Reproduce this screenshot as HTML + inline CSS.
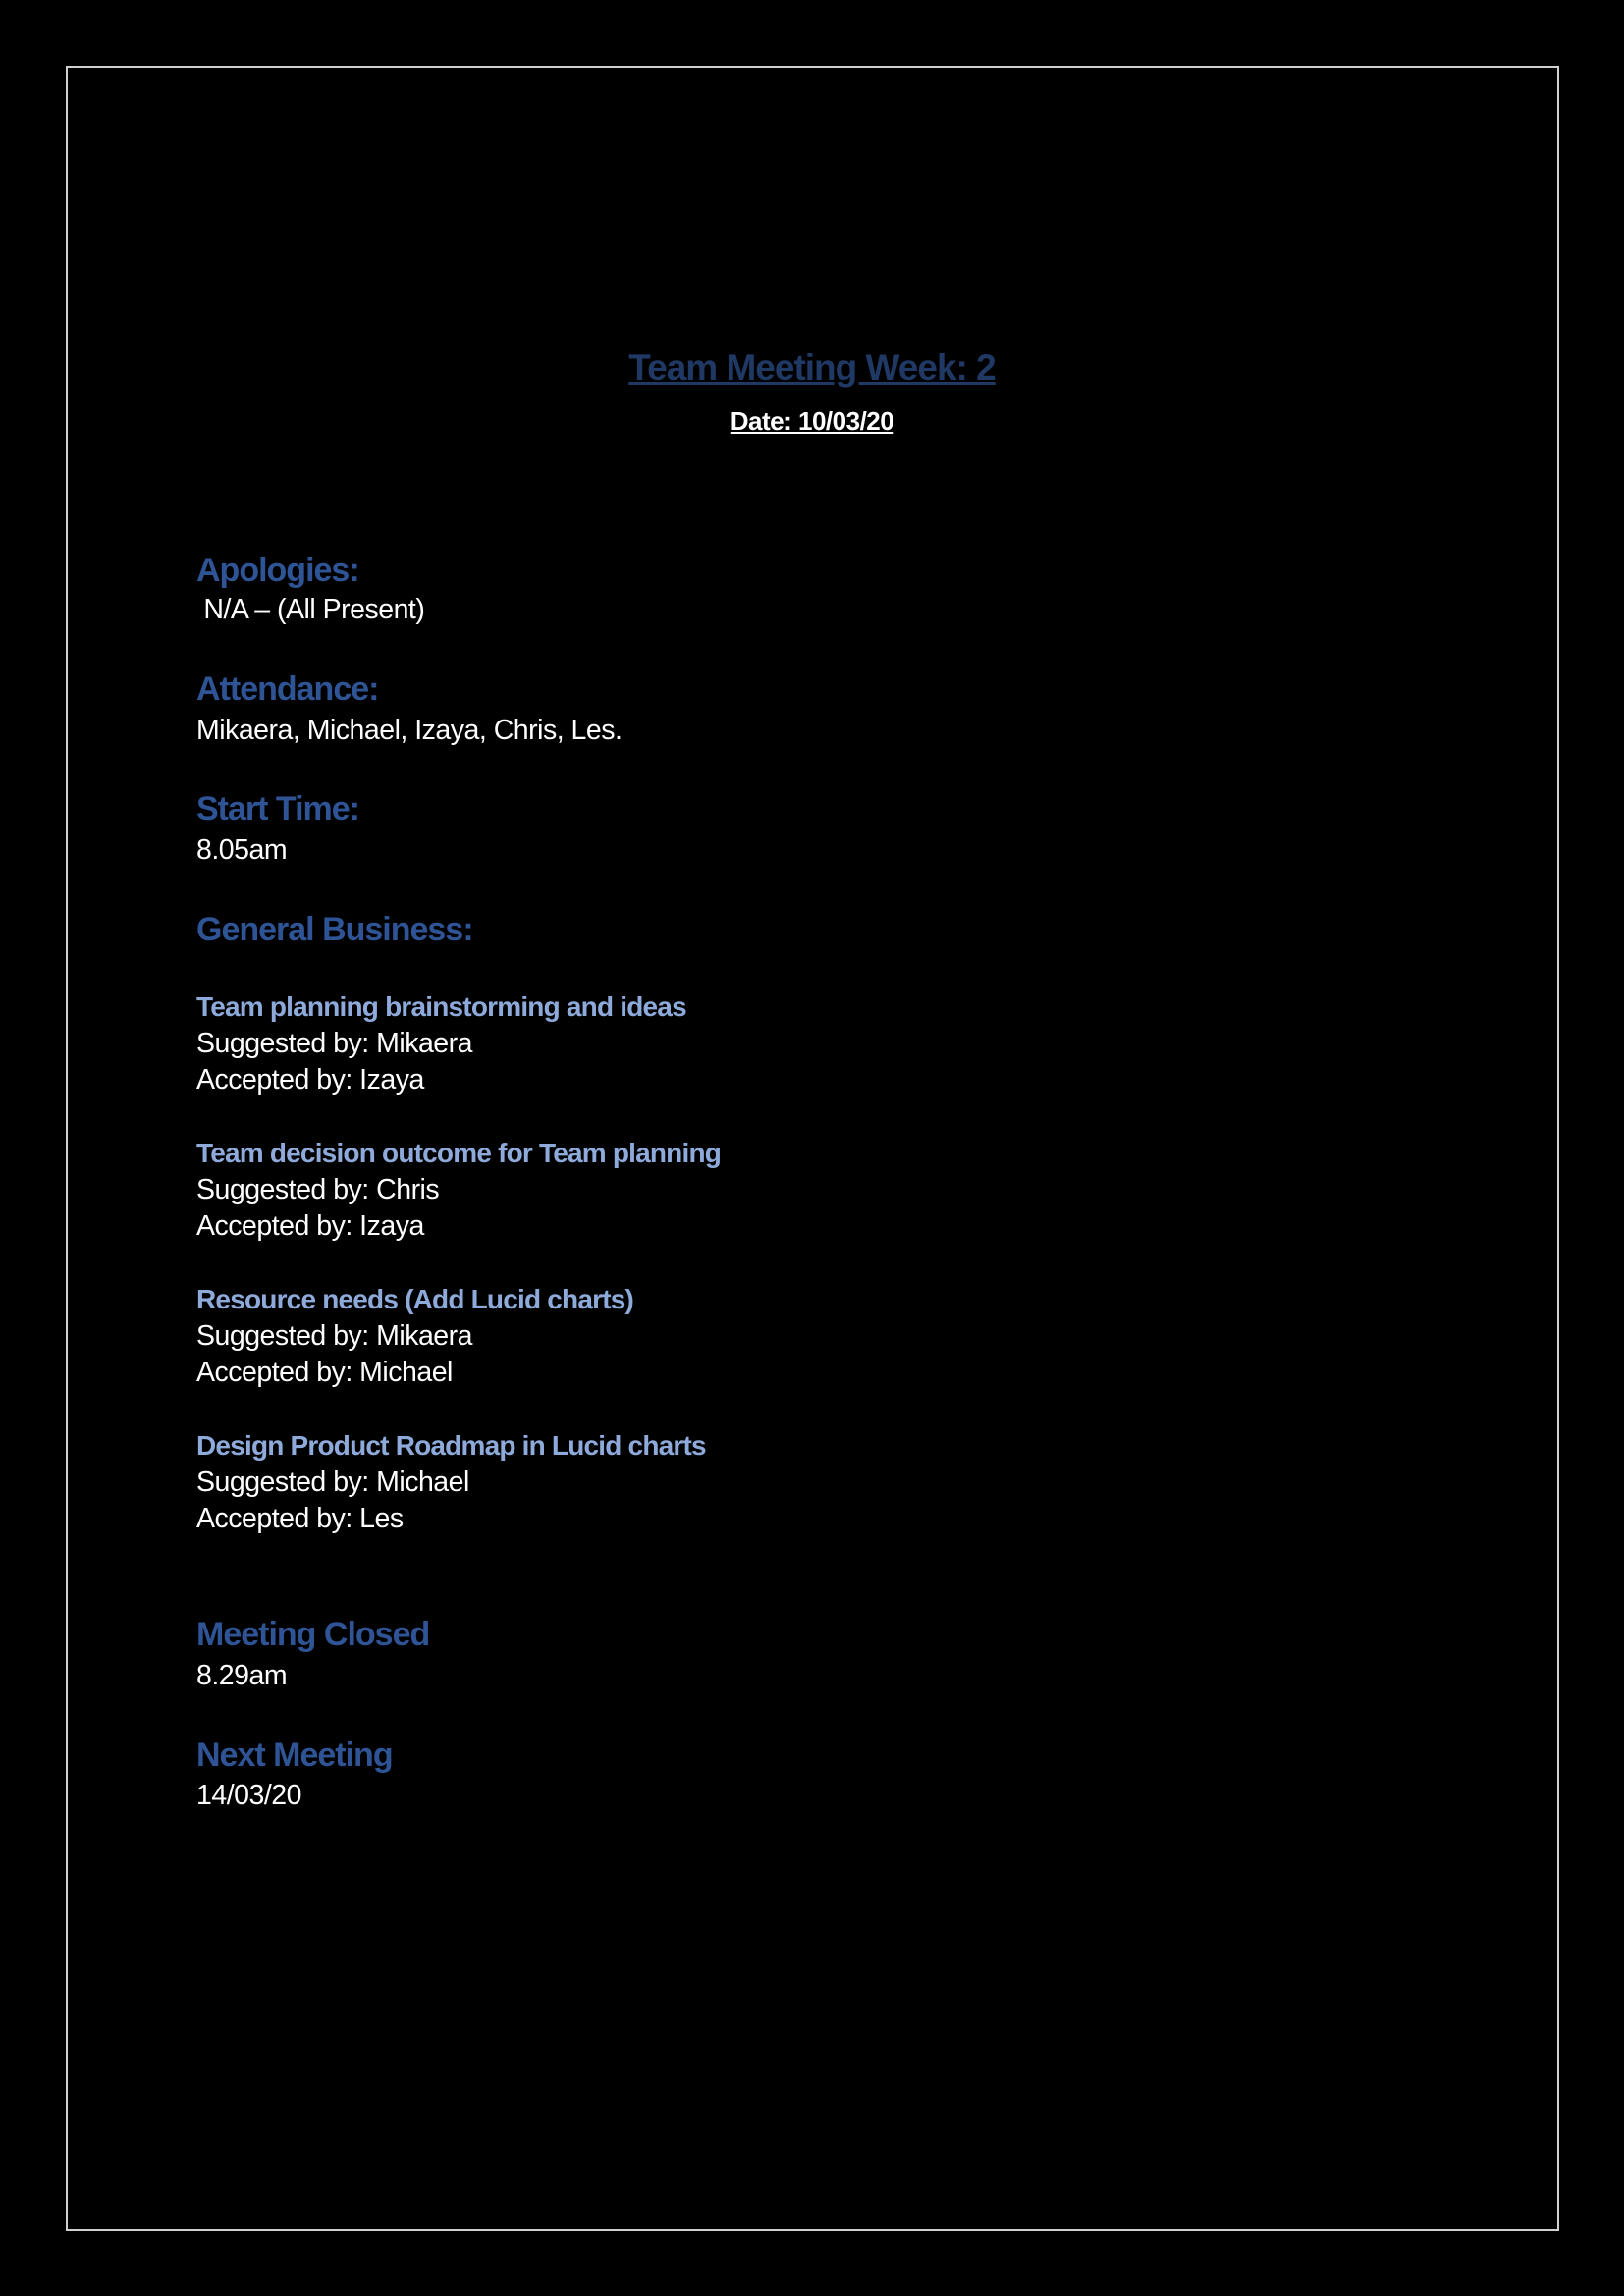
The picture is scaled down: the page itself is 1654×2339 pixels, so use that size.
<!DOCTYPE html>
<html><head><meta charset="utf-8"><style>
html,body{margin:0;padding:0;background:#000;}
body{width:1654px;height:2339px;position:relative;overflow:hidden;font-family:"Liberation Sans",sans-serif;}
.b{position:absolute;left:67px;top:67px;width:1521px;height:2206px;border:2px solid #d0d0d0;box-sizing:border-box;}
.t{position:absolute;left:200px;white-space:nowrap;height:40px;line-height:40px;}
.h{color:#2f5496;font-size:34px;font-weight:bold;letter-spacing:-1px;}
.s{color:#8eaadb;font-size:28px;font-weight:bold;letter-spacing:-0.8px;}
.p{color:#fff;font-size:28.5px;letter-spacing:-0.5px;}
.c{left:0;width:1654px;text-align:center;}
</style></head><body>
<div class="b"></div>
<div class="t c" style="top:355px;color:#1f3864;font-size:37px;font-weight:bold;text-decoration:underline;letter-spacing:-1px;">Team Meeting Week: 2</div>
<div class="t c" style="top:409px;color:#fff;font-size:26px;font-weight:bold;text-decoration:underline;letter-spacing:-0.5px;">Date: 10/03/20</div>
<div class="t h" style="top:561px">Apologies:</div>
<div class="t p" style="top:601px">&nbsp;N/A – (All Present)</div>
<div class="t h" style="top:682px">Attendance:</div>
<div class="t p" style="top:724px">Mikaera, Michael, Izaya, Chris, Les.</div>
<div class="t h" style="top:804px">Start Time:</div>
<div class="t p" style="top:846px">8.05am</div>
<div class="t h" style="top:927px">General Business:</div>
<div class="t s" style="top:1006px">Team planning brainstorming and ideas</div>
<div class="t p" style="top:1043px">Suggested by: Mikaera</div>
<div class="t p" style="top:1080px">Accepted by: Izaya</div>
<div class="t s" style="top:1155px">Team decision outcome for Team planning</div>
<div class="t p" style="top:1192px">Suggested by: Chris</div>
<div class="t p" style="top:1229px">Accepted by: Izaya</div>
<div class="t s" style="top:1304px">Resource needs (Add Lucid charts)</div>
<div class="t p" style="top:1341px">Suggested by: Mikaera</div>
<div class="t p" style="top:1378px">Accepted by: Michael</div>
<div class="t s" style="top:1453px">Design Product Roadmap in Lucid charts</div>
<div class="t p" style="top:1490px">Suggested by: Michael</div>
<div class="t p" style="top:1527px">Accepted by: Les</div>
<div class="t h" style="top:1645px">Meeting Closed</div>
<div class="t p" style="top:1687px">8.29am</div>
<div class="t h" style="top:1768px">Next Meeting</div>
<div class="t p" style="top:1809px">14/03/20</div>
</body></html>
